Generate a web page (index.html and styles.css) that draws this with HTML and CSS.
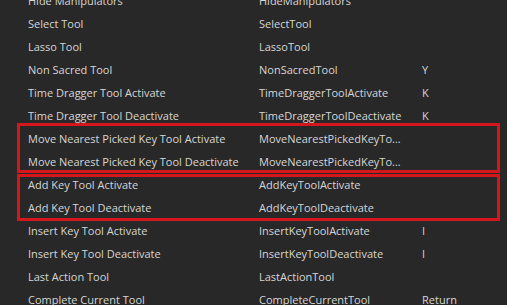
FILE: index.html
```html
<!DOCTYPE html>
<html lang="en">

<head>
    <meta charset="UTF-8">
    <title>Hotkeys</title>
    <link rel="stylesheet" href="styles.css">
</head>

<body>
    <div class="page">
        <div class="list">
            <div class="row"><span>Hide Manipulators</span><span>HideManipulators</span><span></span></div>
            <div class="row"><span>Select Tool</span><span>SelectTool</span><span></span></div>
            <div class="row"><span>Lasso Tool</span><span>LassoTool</span><span></span></div>
            <div class="row"><span>Non Sacred Tool</span><span>NonSacredTool</span><span>Y</span></div>
            <div class="row"><span>Time Dragger Tool Activate</span><span>TimeDraggerToolActivate</span><span>K</span></div>
            <div class="row"><span>Time Dragger Tool Deactivate</span><span>TimeDraggerToolDeactivate</span><span>K</span></div>
            <div class="row"><span>Move Nearest Picked Key Tool Activate</span><span>MoveNearestPickedKeyTo...</span><span></span></div>
            <div class="row"><span>Move Nearest Picked Key Tool Deactivate</span><span>MoveNearestPickedKeyTo...</span><span></span></div>
            <div class="row"><span>Add Key Tool Activate</span><span>AddKeyToolActivate</span><span></span></div>
            <div class="row"><span>Add Key Tool Deactivate</span><span>AddKeyToolDeactivate</span><span></span></div>
            <div class="row"><span>Insert Key Tool Activate</span><span>InsertKeyToolActivate</span><span>I</span></div>
            <div class="row"><span>Insert Key Tool Deactivate</span><span>InsertKeyToolDeactivate</span><span>I</span></div>
            <div class="row"><span>Last Action Tool</span><span>LastActionTool</span><span></span></div>
            <div class="row"><span>Complete Current Tool</span><span>CompleteCurrentTool</span><span>Return</span></div>
        </div>

        <!-- red marks drawn over the key tool rows -->
        <div class="mark mark_move"></div>
        <div class="mark mark_add"></div>
    </div>
</body>

</html>
```

FILE: styles.css
```css
body {
    margin: 0;
    padding: 0;
    background-color: #282828;
    font-family: "Open Sans", "Noto Sans", sans-serif;
    font-size: 11px;
    color: #d6d6d6;
    overflow: hidden;
}

.page {
    position: relative;
    height: 305px;
    overflow: hidden;
}

.list {
    margin-top: -11px;
    padding-left: 28px;
}

.row {
    display: grid;
    grid-template-columns: 231px 163px 1fr;
    height: 23px;
    line-height: 23px;
    white-space: nowrap;
}

.mark {
    position: absolute;
    left: 17px;
    width: 483px;
    box-sizing: border-box;
    border: 3px solid #d5161d;
}

.mark_move {
    top: 123px;
    height: 50px;
}

.mark_add {
    top: 174px;
    height: 47px;
}
```
